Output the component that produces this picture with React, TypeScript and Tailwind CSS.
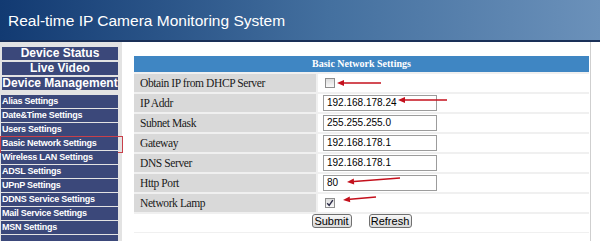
import React from 'react';

const mainMenu = ['Device Status', 'Live Video', 'Device Management'];

const subMenu = [
  'Alias Settings',
  'Date&Time Settings',
  'Users Settings',
  'Basic Network Settings',
  'Wireless LAN Settings',
  'ADSL Settings',
  'UPnP Settings',
  'DDNS Service Settings',
  'Mail Service Settings',
  'MSN Settings',
  '',
];

type Row = { label: string; value?: string; check?: boolean };

const rows: Row[] = [
  { label: 'Obtain IP from DHCP Server', check: false },
  { label: 'IP Addr', value: '192.168.178.24' },
  { label: 'Subnet Mask', value: '255.255.255.0' },
  { label: 'Gateway', value: '192.168.178.1' },
  { label: 'DNS Server', value: '192.168.178.1' },
  { label: 'Http Port', value: '80' },
  { label: 'Network Lamp', check: true },
];

// red annotation arrows: head -> tail
const arrows = [
  [337, 83, 381, 83],
  [398, 100, 447, 100],
  [347, 182, 400, 178],
  [343, 200, 376, 197],
];

const Arrow = ({ x1, y1, x2, y2 }: { x1: number; y1: number; x2: number; y2: number }) => {
  const a = Math.atan2(y2 - y1, x2 - x1);
  const len = 7;
  const half = 3;
  const bx = x1 + Math.cos(a) * len;
  const by = y1 + Math.sin(a) * len;
  const px = -Math.sin(a) * half;
  const py = Math.cos(a) * half;
  return (
    <g>
      <line x1={bx} y1={by} x2={x2} y2={y2} stroke="#c4101c" strokeWidth={1.5} />
      <polygon points={`${x1},${y1} ${bx + px},${by + py} ${bx - px},${by - py}`} fill="#c4101c" />
    </g>
  );
};

const CheckBox = ({ checked }: { checked: boolean }) => (
  <span className="ml-[2px] flex h-[10px] w-[10px] items-center justify-center border border-[#8e8e8e] bg-gradient-to-b from-[#dcdcdc] to-[#fafafa]">
    {checked && (
      <svg width="8" height="8" viewBox="0 0 8 8">
        <path d="M1.2 4.2 L3.2 6.4 L6.8 1.2" fill="none" stroke="#2b2b48" strokeWidth={1.4} />
      </svg>
    )}
  </span>
);

const App: React.FC = () => {
  return (
    <div className="relative h-[241px] w-[600px] overflow-hidden bg-white">
      {/* header */}
      <div className="flex h-[42px] items-center border-b-2 border-[#1a3058] bg-gradient-to-r from-[#123a72] via-[#44709f] via-55% to-[#6b91ba] pl-[8px] pt-[1px] font-['Liberation_Sans',Arial,sans-serif] text-[15.5px] text-white">
        Real-time IP Camera Monitoring System
      </div>

      <div className="flex">
        {/* sidebar */}
        <div className="h-[199px] w-[122px] bg-[#e3e3e3] pt-[5px] pl-[1px] font-['Liberation_Sans',Arial,sans-serif] font-bold text-white">
          {mainMenu.map((m) => (
            <div key={m} className="mb-[2px] ml-[1px] h-[13px] w-[116px] bg-[#3b487a] text-center text-[12px] leading-[13px]">
              {m}
            </div>
          ))}
          <div className="mt-[5px] flex flex-col gap-[1px]">
            {subMenu.map((s, i) => (
              <div key={i} className="relative h-[13px] w-[117px] bg-[#3b487a] pl-[1px] text-[9px] leading-[13px] tracking-[-0.25px]">
                {s}
                {s === 'Basic Network Settings' && (
                  <span className="absolute -top-[1px] -bottom-[3px] -left-[1px] -right-[5px] border border-[#c8404a]" />
                )}
              </div>
            ))}
          </div>
        </div>

        {/* main panel */}
        <div className="h-[199px] w-[469px] border-r border-[#cfcfcf] pl-[12px] pr-[1px] pt-[14px]">
          <div className="flex w-[455px] flex-col gap-[2px] bg-[#f0f0f0] pb-[1px]">
            <div className="h-[16px] bg-[#3f86c3] text-center font-['Liberation_Serif','Times_New_Roman',serif] text-[10px] font-bold leading-[16px] text-white">
              Basic Network Settings
            </div>
            {rows.map((r) => (
              <div key={r.label} className="flex h-[18px] gap-[2px]">
                <div className="w-[182px] bg-[#d9d9d9] pl-[6px] font-['Liberation_Serif','Times_New_Roman',serif] text-[11.5px] leading-[18px] tracking-[-0.4px] text-[#1a1a1a]">
                  {r.label}
                </div>
                <div className="flex flex-1 items-center bg-white pl-[5px]">
                  {r.value !== undefined ? (
                    <div className="h-[16px] w-[114px] border border-[#9c9c9c] bg-white pl-[3px] font-['Liberation_Sans',Arial,sans-serif] text-[10px] leading-[14px] text-black">
                      {r.value}
                    </div>
                  ) : (
                    <CheckBox checked={!!r.check} />
                  )}
                </div>
              </div>
            ))}
            <div className="flex h-[18px] items-start justify-center gap-[17px] bg-white font-['Liberation_Sans',Arial,sans-serif] text-[11px] text-black">
              <button className="h-[14px] w-[40px] rounded-[3px] border border-[#707070] bg-gradient-to-b from-[#f6f6f6] to-[#dadada] leading-[12px]">
                Submit
              </button>
              <button className="h-[14px] w-[43px] rounded-[3px] border border-[#707070] bg-gradient-to-b from-[#f6f6f6] to-[#dadada] leading-[12px]">
                Refresh
              </button>
            </div>
          </div>
        </div>
      </div>

      {/* annotation arrows */}
      <svg className="pointer-events-none absolute left-0 top-0" width="600" height="241">
        {arrows.map(([x1, y1, x2, y2], i) => (
          <Arrow key={i} x1={x1} y1={y1} x2={x2} y2={y2} />
        ))}
      </svg>
    </div>
  );
};

export default App;
